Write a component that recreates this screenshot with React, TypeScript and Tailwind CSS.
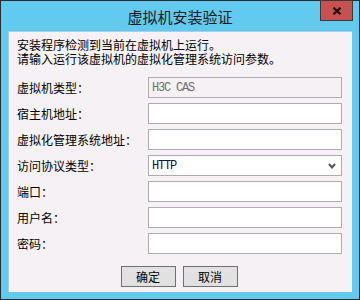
const rows = [
  { label: "虚拟机类型：", kind: "disabled", value: "H3C CAS" },
  { label: "宿主机地址：", kind: "input", value: "" },
  { label: "虚拟化管理系统地址：", kind: "input", value: "" },
  { label: "访问协议类型：", kind: "select", value: "HTTP" },
  { label: "端口：", kind: "input", value: "" },
  { label: "用户名：", kind: "input", value: "" },
  { label: "密码：", kind: "input", value: "" },
];

function Field({ kind, value }: { kind: string; value: string }) {
  if (kind === "disabled") {
    return (
      <div className="flex h-[21px] w-[194px] items-center border border-[#abadb3] bg-[#f5f1f5] pl-[3px] font-[family-name:Liberation_Mono,monospace] text-[12px] tracking-[-1.2px] text-[#707070]">
        {value}
      </div>
    );
  }
  if (kind === "select") {
    return (
      <div className="flex h-[21px] w-[194px] items-center justify-between border border-[#abadb3] bg-white pl-[3px] pr-[5px] font-[family-name:Liberation_Mono,monospace] text-[12px] tracking-[-1.2px] text-[#10103a]">
        <span>{value}</span>
        <svg width="8" height="6" viewBox="0 0 8 6">
          <path d="M1 1 L4 4.5 L7 1" fill="none" stroke="#555" strokeWidth="2" />
        </svg>
      </div>
    );
  }
  return <div className="h-[21px] w-[194px] border border-[#abadb3] bg-white" />;
}

export default function App() {
  return (
    <div className="flex h-[300px] w-[360px] flex-col border border-[#2b2b2b] bg-[#62c9ef] font-['Noto_Sans_CJK_SC',sans-serif] text-black">
      <div className="relative flex h-[30px] items-center justify-center">
        <span className="text-[15px] leading-none text-[#1a1a1a]">虚拟机安装验证</span>
        <div className="absolute right-[6px] top-[-1px] flex h-[21px] w-[33px] items-center justify-center border border-[#3a3a3a] bg-[#c75050]">
          <svg width="10" height="8" viewBox="0 0 10 8">
            <path d="M1.5 0.8 L8.5 7.2 M8.5 0.8 L1.5 7.2" stroke="#111" strokeWidth="2.2" />
          </svg>
        </div>
      </div>
      <div className="mx-[7px] flex flex-1 flex-col border-l border-t border-[#a9cfe4] bg-[#f5f1f5] pl-[8px] pr-[10px] pt-[6px] text-[12px]">
        <div className="leading-[14px]">安装程序检测到当前在虚拟机上运行。</div>
        <div className="leading-[14px]">请输入运行该虚拟机的虚拟化管理系统访问参数。</div>
        <div className="mt-[11px] flex flex-col gap-[5px]">
          {rows.map((r) => (
            <div key={r.label} className="flex items-center">
              <span className="w-[131px] leading-[13px]">{r.label}</span>
              <Field kind={r.kind} value={r.value} />
            </div>
          ))}
        </div>
        <div className="mt-[12px] flex justify-center gap-[7px] pr-[1px]">
          <button className="h-[21px] w-[55px] border border-[#707070] bg-[#e1e1e1] text-[12px] leading-none">确定</button>
          <button className="h-[21px] w-[55px] border border-[#707070] bg-[#e1e1e1] text-[12px] leading-none">取消</button>
        </div>
      </div>
      <div className="h-[7px]" />
    </div>
  );
}
